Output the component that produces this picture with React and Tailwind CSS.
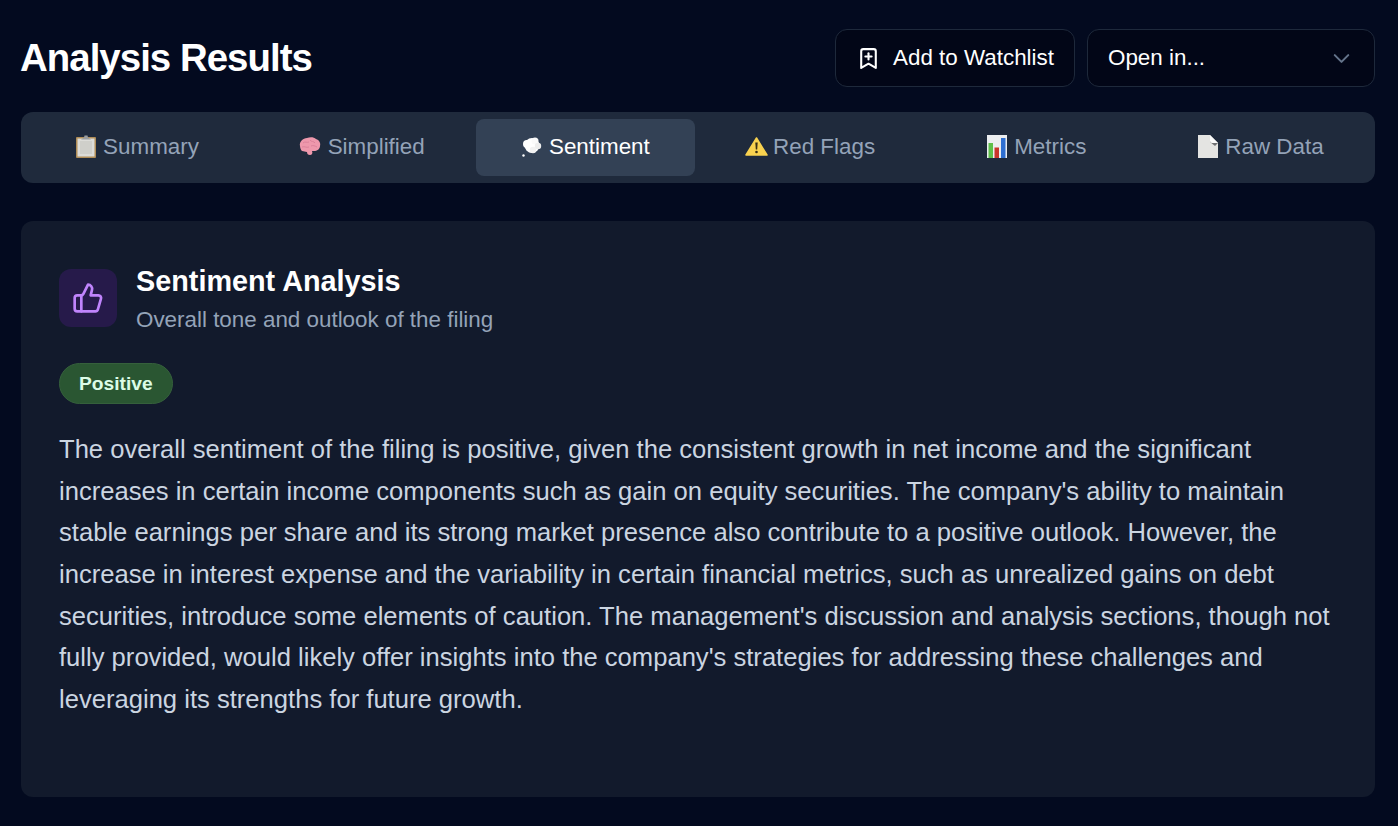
import React from 'react';
import { BookmarkPlus, ChevronDown, ThumbsUp } from 'lucide-react';

const sans = 'font-["Liberation_Sans",Arial,sans-serif]';

function ClipboardIcon() {
  return (
    <svg width="20" height="23" viewBox="0 0 20 23">
      <rect x="0" y="2" width="20" height="21" rx="1" fill="#b08d57" />
      <rect x="1.5" y="3.5" width="17" height="18" fill="#dcdcd8" />
      <rect x="4" y="6" width="12" height="13" fill="#cfcfca" />
      <path d="M5 4.5 L8 2.5 L8.5 0.5 H11.5 L12 2.5 L15 4.5 Z" fill="#9a9da0" />
    </svg>
  );
}

function BrainIcon() {
  return (
    <svg width="22" height="19" viewBox="0 0 22 19">
      <path d="M1 9C0 5 4 1 8 1c3-1 7-1 9 1 3 1 5 4 4 7 0 3-3 5-6 5-1 0-2 0-2 0 1 2 0 4-2 4s-3-1-3-3c-2 0-3-1-5-1C3 14 1 12 1 9z" fill="#ee98ac" />
      <path d="M4 6c2-2 4 0 6-1M3 10c3-1 4 1 7 0M11 3c1 2 4 1 5 3M12 9c2-1 4 0 6 1" stroke="#d97f98" strokeWidth="0.9" fill="none" />
    </svg>
  );
}

function BubbleIcon() {
  return (
    <svg width="20" height="20" viewBox="0 0 20 20">
      <circle cx="10" cy="8.5" r="7.5" fill="#fff" />
      <circle cx="5" cy="7" r="4" fill="#fff" />
      <circle cx="13" cy="4" r="3.5" fill="#fafafa" />
      <circle cx="16" cy="9" r="3.2" fill="#ededed" />
      <circle cx="11" cy="13" r="3.2" fill="#f2f2f2" />
      <circle cx="1.5" cy="18.5" r="1.2" fill="#fff" />
    </svg>
  );
}

function WarningIcon() {
  return (
    <svg width="23" height="19" viewBox="0 0 23 19" className="mr-[-2px]">
      <path d="M11.5 1 L22 18 H1 Z" fill="#f9d24f" stroke="#f9d24f" strokeWidth="1.5" strokeLinejoin="round" />
      <path d="M10.3 5.5 H12.7 L12.2 12.5 H10.8 Z" fill="#3a2f14" />
      <circle cx="11.5" cy="15" r="1.3" fill="#3a2f14" />
    </svg>
  );
}

function ChartIcon() {
  return (
    <svg width="20" height="23" viewBox="0 0 20 23" className="ml-[5px]">
      <rect width="20" height="23" fill="#eceef0" />
      <rect x="1.5" y="8" width="4.5" height="15" fill="#5fbf4a" />
      <rect x="7.5" y="12.5" width="4.5" height="10.5" fill="#c9352b" />
      <rect x="14" y="3" width="4.5" height="20" fill="#2f6fd1" />
    </svg>
  );
}

function PageIcon() {
  return (
    <svg width="20" height="23" viewBox="0 0 20 23" className="ml-[5px]">
      <path d="M0 0H12L20 8V23H0Z" fill="#e4e4e2" />
      <path d="M12 0L20 8L17 11L12 7Z" fill="#6f7073" />
      <path d="M12 0L20 8H14Q12 8 12 6Z" fill="#fafafa" />
    </svg>
  );
}

const tabs = [
  { label: 'Summary', icon: <ClipboardIcon /> },
  { label: 'Simplified', icon: <BrainIcon /> },
  { label: 'Sentiment', icon: <BubbleIcon />, active: true },
  { label: 'Red Flags', icon: <WarningIcon /> },
  { label: 'Metrics', icon: <ChartIcon /> },
  { label: 'Raw Data', icon: <PageIcon /> },
];

export default function App() {
  return (
    <div className={`h-[826px] overflow-hidden bg-[#030a1f] pl-[21px] pr-[23px] pt-[29px] ${sans}`}>
      <div className="flex items-center justify-between">
        <h1 className="ml-[-1px] text-[38.4px] leading-[58px] font-bold tracking-[-0.96px] text-white">Analysis Results</h1>
        <div className="flex gap-3">
          <button className="flex h-[58px] w-[240px] items-center justify-center gap-[12px] rounded-xl border border-[#1e293b] bg-[#020617] text-[22.4px] text-white">
            <BookmarkPlus size={25} strokeWidth={2} />
            Add to Watchlist
          </button>
          <div className="flex h-[58px] w-[288px] items-center justify-between rounded-xl border border-[#1e293b] bg-[#020617] pl-5 pr-[19px] text-[22.4px] text-white">
            Open in...
            <ChevronDown size={27} strokeWidth={1.8} className="text-[#64748b]" />
          </div>
        </div>
      </div>

      <div className="mt-[25px] grid h-[71px] grid-cols-6 gap-[5.2px] rounded-xl bg-[#1f2a3c] p-[7px]">
        {tabs.map(t => (
          <div
            key={t.label}
            className={`flex items-center justify-center gap-[7px] rounded-lg pb-[2px] text-[22.4px] ${t.active ? 'bg-[#334155] text-white' : 'text-[#94a3b8]'}`}
          >
            {t.icon}
            {t.label}
          </div>
        ))}
      </div>

      <div className="mt-[38px] h-[576px] rounded-xl bg-[#121a2c] px-[38px] pt-[48px]">
        <div className="flex gap-[19px]">
          <div className="flex h-[58px] w-[58px] items-center justify-center rounded-xl bg-[#261a4a]">
            <ThumbsUp size={32} className="text-[#c084fc]" />
          </div>
          <div>
            <h2 className="mt-[-1px] text-[28.8px] leading-[27px] font-bold text-white">Sentiment Analysis</h2>
            <p className="mt-[10px] text-[22.4px] leading-[29px] text-[#94a3b8]">Overall tone and outlook of the filing</p>
          </div>
        </div>
        <span className="mt-[29px] inline-flex h-[41px] items-center rounded-full border border-[#35603c] bg-[#2a5632] px-[19px] pt-[1px] text-[19.2px] font-bold text-[#dcfce7]">Positive</span>
        <p className="mt-[25.3px] text-[25.6px] leading-[41.6px] text-[#cbd5e1]">
          The overall sentiment of the filing is positive, given the consistent growth in net income and the significant increases in certain income components such as gain on equity securities. The company's ability to maintain stable earnings per share and its strong market presence also contribute to a positive outlook. However, the increase in interest expense and the variability in certain financial metrics, such as unrealized gains on debt securities, introduce some elements of caution. The management's discussion and analysis sections, though not fully provided, would likely offer insights into the company's strategies for addressing these challenges and leveraging its strengths for future growth.
        </p>
      </div>
    </div>
  );
}
